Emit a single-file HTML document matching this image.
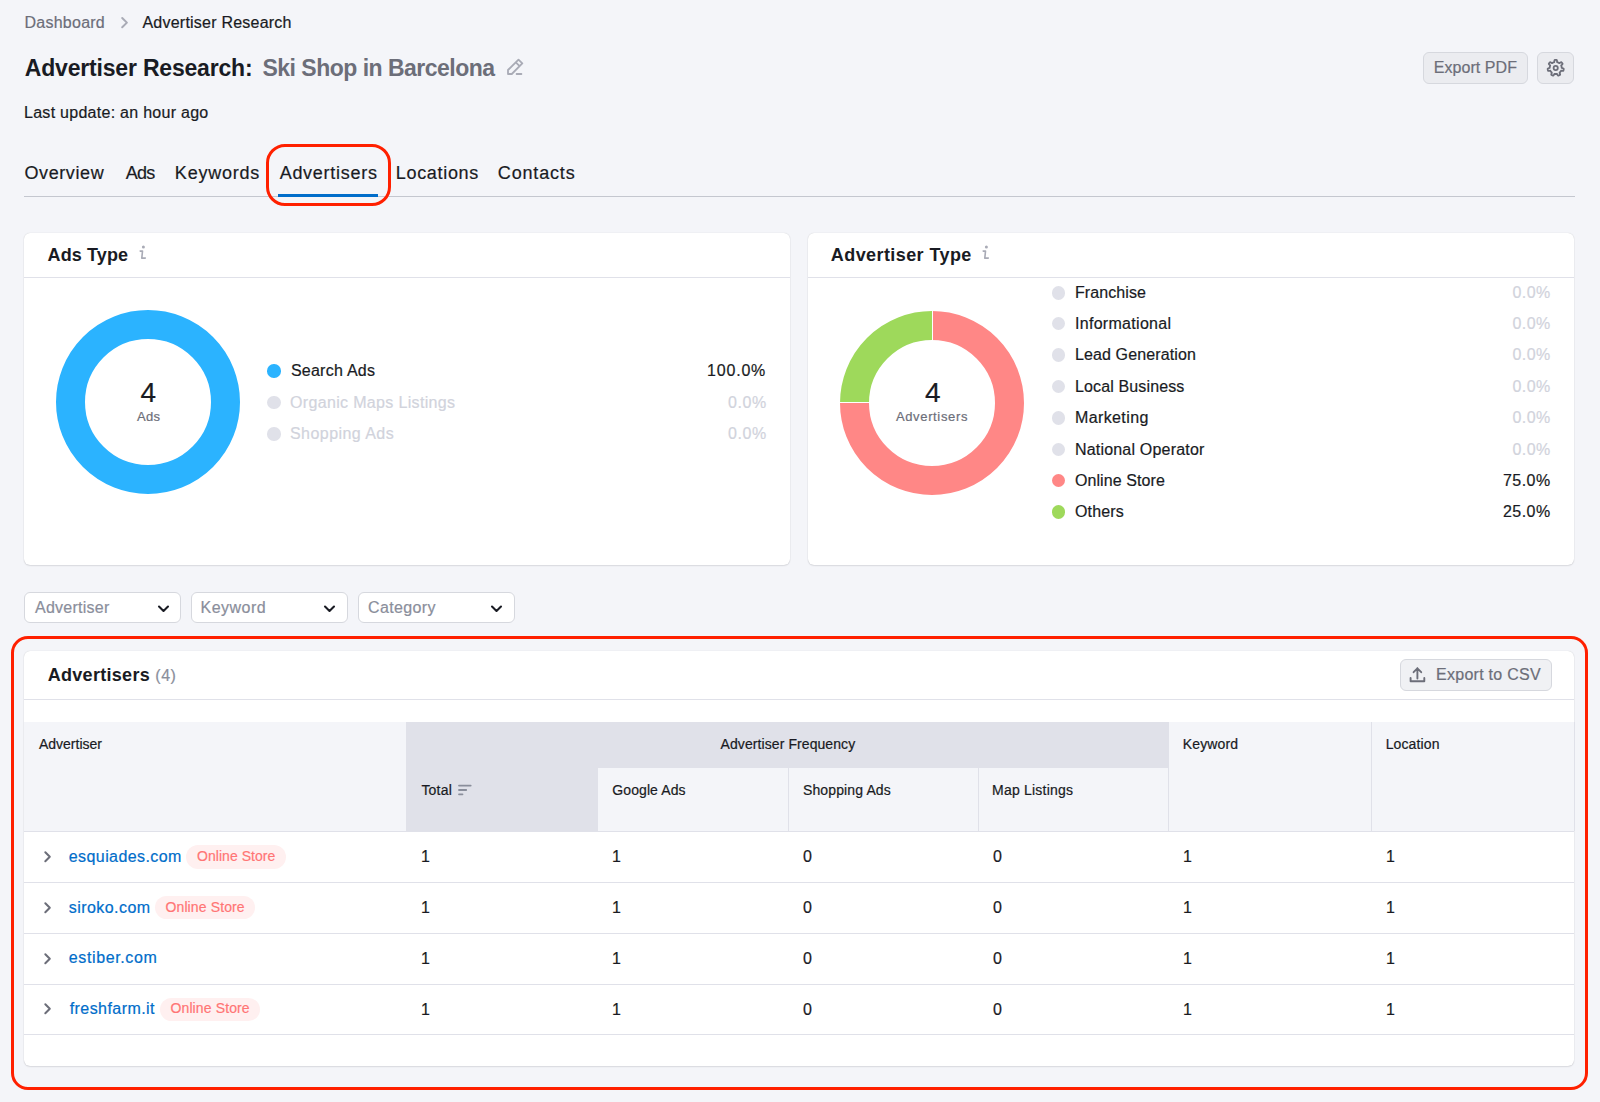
<!DOCTYPE html>
<html><head><meta charset="utf-8"><style>
html,body{margin:0;padding:0;}
body{width:1600px;height:1102px;background:#f4f5f9;position:relative;overflow:hidden;font-family:"Liberation Sans",sans-serif;}
.a,.t{position:absolute;}
.t{white-space:nowrap;line-height:1;-webkit-text-stroke:0.2px currentColor;}
.card{background:#fff;border-radius:6px;box-shadow:0 0 1px rgba(25,27,35,0.22),0 1px 1.5px rgba(25,27,35,0.10);}
.btn{background:#ebecf0;border:1px solid #d6d8de;border-radius:6px;box-sizing:border-box;}
.btn2{background:#f0f1f4;border:1px solid #d6d8de;border-radius:6px;box-sizing:border-box;}
.dd{background:#fff;border:1px solid #d6d8de;border-radius:6px;box-sizing:border-box;}
svg.a{overflow:visible;}
</style></head><body>
<div id="bc1" class="t" style="left:24.57px;top:14.76px;font-size:16px;font-weight:400;color:#6c6e79;letter-spacing:0.236px;">Dashboard</div>
<svg class="a" style="left:118px;top:15px" width="12" height="15" viewBox="0 0 12 15"><path d="M4.2 3.0 L8.9 7.6 L4.2 12.2" fill="none" stroke="#a9abb6" stroke-width="2.0" stroke-linecap="round" stroke-linejoin="round"/></svg>
<div id="bc2" class="t" style="left:142.47px;top:14.76px;font-size:16px;font-weight:400;color:#191b23;letter-spacing:0.225px;">Advertiser Research</div>
<div id="ti1" class="t" style="left:24.84px;top:56.73px;font-size:23px;font-weight:700;color:#191b23;letter-spacing:-0.192px;-webkit-text-stroke:0;">Advertiser Research:</div>
<div id="ti2" class="t" style="left:262.47px;top:56.73px;font-size:23px;font-weight:700;color:#6c6e79;letter-spacing:-0.513px;-webkit-text-stroke:0;">Ski Shop in Barcelona</div>
<svg class="a" style="left:506px;top:57px" width="18" height="19" viewBox="0 0 18 19"><path d="M2 17 V13 L12.5 2.6 L16.3 6.4 L5.8 17 Z M9.8 5.3 L13.6 9.1 M10.6 17 H15.4" fill="none" stroke="#a9abb6" stroke-width="1.8" stroke-linejoin="round" stroke-linecap="round"/></svg>
<div class="a btn" style="left:1423.3px;top:51.6px;width:104.6px;height:32.2px"></div>
<div id="pdf" class="t" style="left:1433.78px;top:59.66px;font-size:16px;font-weight:400;color:#6c6e79;letter-spacing:0.060px;">Export PDF</div>
<div class="a btn" style="left:1536.9px;top:51.6px;width:37.3px;height:32.2px"></div>
<svg class="a" style="left:1545px;top:57px" width="22" height="22" viewBox="0 0 22 22"><path d="M10.70 2.90 L10.88 2.90 L11.06 2.91 L11.24 2.92 L11.43 2.93 L11.61 2.95 L11.78 3.05 L11.91 3.38 L12.00 3.86 L12.05 4.39 L12.10 4.85 L12.18 5.14 L12.30 5.22 L12.43 5.25 L12.55 5.29 L12.68 5.34 L12.81 5.38 L12.93 5.43 L13.06 5.48 L13.18 5.54 L13.30 5.59 L13.42 5.65 L13.54 5.72 L13.66 5.78 L13.78 5.85 L13.89 5.92 L14.01 5.99 L14.12 6.07 L14.23 6.15 L14.36 6.19 L14.63 6.07 L15.02 5.82 L15.47 5.54 L15.91 5.30 L16.24 5.20 L16.43 5.27 L16.55 5.40 L16.68 5.54 L16.80 5.67 L16.92 5.81 L17.03 5.95 L17.14 6.09 L17.25 6.24 L17.36 6.39 L17.46 6.54 L17.56 6.69 L17.58 6.89 L17.41 7.19 L17.09 7.56 L16.71 7.94 L16.38 8.26 L16.20 8.50 L16.22 8.64 L16.27 8.77 L16.32 8.89 L16.36 9.02 L16.41 9.15 L16.45 9.27 L16.48 9.40 L16.52 9.53 L16.55 9.66 L16.58 9.80 L16.60 9.93 L16.63 10.06 L16.65 10.19 L16.66 10.33 L16.68 10.46 L16.69 10.60 L16.69 10.73 L16.74 10.86 L17.01 11.00 L17.44 11.15 L17.95 11.33 L18.40 11.52 L18.69 11.72 L18.75 11.91 L18.73 12.09 L18.70 12.27 L18.67 12.45 L18.64 12.62 L18.60 12.80 L18.55 12.98 L18.51 13.15 L18.46 13.33 L18.40 13.50 L18.35 13.68 L18.21 13.82 L17.86 13.87 L17.37 13.85 L16.84 13.79 L16.38 13.74 L16.09 13.74 L15.98 13.84 L15.92 13.96 L15.85 14.08 L15.78 14.19 L15.71 14.31 L15.63 14.42 L15.55 14.53 L15.47 14.63 L15.39 14.74 L15.31 14.85 L15.22 14.95 L15.13 15.05 L15.04 15.15 L14.94 15.24 L14.85 15.34 L14.75 15.43 L14.65 15.52 L14.57 15.64 L14.63 15.93 L14.79 16.37 L14.96 16.87 L15.09 17.34 L15.12 17.69 L15.01 17.86 L14.85 17.95 L14.70 18.04 L14.54 18.13 L14.38 18.22 L14.21 18.30 L14.05 18.37 L13.88 18.45 L13.72 18.52 L13.55 18.58 L13.38 18.65 L13.18 18.63 L12.92 18.39 L12.63 17.99 L12.35 17.54 L12.10 17.15 L11.91 16.92 L11.77 16.90 L11.64 16.93 L11.51 16.95 L11.37 16.96 L11.24 16.98 L11.10 16.99 L10.97 16.99 L10.83 17.00 L10.70 17.00 L10.57 17.00 L10.43 16.99 L10.30 16.99 L10.16 16.98 L10.03 16.96 L9.89 16.95 L9.76 16.93 L9.63 16.90 L9.49 16.92 L9.30 17.15 L9.05 17.54 L8.77 17.99 L8.48 18.39 L8.22 18.63 L8.02 18.65 L7.85 18.58 L7.68 18.52 L7.52 18.45 L7.35 18.37 L7.19 18.30 L7.02 18.22 L6.86 18.13 L6.70 18.04 L6.55 17.95 L6.39 17.86 L6.28 17.69 L6.31 17.34 L6.44 16.87 L6.61 16.37 L6.77 15.93 L6.83 15.64 L6.75 15.52 L6.65 15.43 L6.55 15.34 L6.46 15.24 L6.36 15.15 L6.27 15.05 L6.18 14.95 L6.09 14.85 L6.01 14.74 L5.93 14.63 L5.85 14.53 L5.77 14.42 L5.69 14.31 L5.62 14.19 L5.55 14.08 L5.48 13.96 L5.42 13.84 L5.31 13.74 L5.02 13.74 L4.56 13.79 L4.03 13.85 L3.54 13.87 L3.19 13.82 L3.05 13.68 L3.00 13.50 L2.94 13.33 L2.89 13.15 L2.85 12.98 L2.80 12.80 L2.76 12.62 L2.73 12.45 L2.70 12.27 L2.67 12.09 L2.65 11.91 L2.71 11.72 L3.00 11.52 L3.45 11.33 L3.96 11.15 L4.39 11.00 L4.66 10.86 L4.71 10.73 L4.71 10.60 L4.72 10.46 L4.74 10.33 L4.75 10.19 L4.77 10.06 L4.80 9.93 L4.82 9.80 L4.85 9.66 L4.88 9.53 L4.92 9.40 L4.95 9.27 L4.99 9.15 L5.04 9.02 L5.08 8.89 L5.13 8.77 L5.18 8.64 L5.20 8.50 L5.02 8.26 L4.69 7.94 L4.31 7.56 L3.99 7.19 L3.82 6.89 L3.84 6.69 L3.94 6.54 L4.04 6.39 L4.15 6.24 L4.26 6.09 L4.37 5.95 L4.48 5.81 L4.60 5.67 L4.72 5.54 L4.85 5.40 L4.97 5.27 L5.16 5.20 L5.49 5.30 L5.93 5.54 L6.38 5.82 L6.77 6.07 L7.04 6.19 L7.17 6.15 L7.28 6.07 L7.39 5.99 L7.51 5.92 L7.62 5.85 L7.74 5.78 L7.86 5.72 L7.98 5.65 L8.10 5.59 L8.22 5.54 L8.34 5.48 L8.47 5.43 L8.59 5.38 L8.72 5.34 L8.85 5.29 L8.97 5.25 L9.10 5.22 L9.22 5.14 L9.30 4.85 L9.35 4.39 L9.40 3.86 L9.49 3.38 L9.62 3.05 L9.79 2.95 L9.97 2.93 L10.16 2.92 L10.34 2.91 L10.52 2.90 Z" fill="none" stroke="#6c6e79" stroke-width="1.8" stroke-linejoin="round"/><circle cx="10.7" cy="11.0" r="2.1" fill="none" stroke="#6c6e79" stroke-width="1.8"/></svg>
<div id="upd" class="t" style="left:24.02px;top:104.76px;font-size:16px;font-weight:400;color:#191b23;letter-spacing:0.274px;">Last update: an hour ago</div>
<div id="tab1" class="t" style="left:24.40px;top:163.76px;font-size:18px;font-weight:400;color:#191b23;letter-spacing:0.617px;">Overview</div>
<div id="tab2" class="t" style="left:125.67px;top:163.76px;font-size:18px;font-weight:400;color:#191b23;letter-spacing:-0.675px;">Ads</div>
<div id="tab3" class="t" style="left:174.87px;top:163.76px;font-size:18px;font-weight:400;color:#191b23;letter-spacing:0.771px;">Keywords</div>
<div id="tab4" class="t" style="left:279.67px;top:163.76px;font-size:18px;font-weight:400;color:#191b23;letter-spacing:0.720px;">Advertisers</div>
<div id="tab5" class="t" style="left:395.82px;top:163.76px;font-size:18px;font-weight:400;color:#191b23;letter-spacing:0.675px;">Locations</div>
<div id="tab6" class="t" style="left:497.82px;top:163.76px;font-size:18px;font-weight:400;color:#191b23;letter-spacing:0.836px;">Contacts</div>
<div class="a" style="left:24px;top:196px;width:1550.5px;height:1px;background:#c4c7cf"></div>
<div class="a" style="left:278.3px;top:193.5px;width:99.8px;height:3px;background:#006dca"></div>
<div class="a" style="left:265.6px;top:144.3px;width:125.2px;height:61.4px;border:3.6px solid #ff2000;border-radius:19px;box-sizing:border-box"></div>
<div class="a card" style="left:24px;top:232.5px;width:766.2px;height:332.5px"></div><div class="a" style="left:24px;top:277px;width:766.2px;height:1px;background:#e0e1e9"></div>
<div class="a card" style="left:808px;top:232.5px;width:766.3px;height:332.5px"></div><div class="a" style="left:808px;top:277px;width:766.3px;height:1px;background:#e0e1e9"></div>
<div id="h1" class="t" style="left:47.56px;top:245.76px;font-size:18px;font-weight:700;color:#191b23;letter-spacing:0.116px;-webkit-text-stroke:0;">Ads Type</div>
<div id="h2" class="t" style="left:830.82px;top:245.76px;font-size:18px;font-weight:700;color:#191b23;letter-spacing:0.418px;-webkit-text-stroke:0;">Advertiser Type</div>
<svg class="a" style="left:136px;top:242px" width="12" height="18" viewBox="0 0 12 18"><circle cx="7.40" cy="5.10" r="1.5" fill="#a9abb6"/><path d="M4.20 9.10 H6.50 L5.80 16.10 H9.30" fill="none" stroke="#a9abb6" stroke-width="1.6" stroke-linecap="round" stroke-linejoin="round"/></svg>
<svg class="a" style="left:979px;top:242px" width="12" height="18" viewBox="0 0 12 18"><circle cx="7.40" cy="5.10" r="1.5" fill="#a9abb6"/><path d="M4.20 9.10 H6.50 L5.80 16.10 H9.30" fill="none" stroke="#a9abb6" stroke-width="1.6" stroke-linecap="round" stroke-linejoin="round"/></svg>
<svg class="a" style="left:54px;top:308.3px" width="188" height="188" viewBox="54 308.3 188 188"><circle cx="148" cy="402.3" r="77.5" fill="none" stroke="#2bb3ff" stroke-width="29"/></svg>
<svg class="a" style="left:838.4px;top:308.5px" width="188" height="188" viewBox="838.4 308.5 188 188"><path d="M932.40 325.00 A77.5 77.5 0 1 1 854.90 402.50" fill="none" stroke="#ff8786" stroke-width="29"/><path d="M854.90 402.50 A77.5 77.5 0 0 1 932.40 325.00" fill="none" stroke="#9ed95b" stroke-width="29"/></svg>
<div class="a" style="left:931.9px;top:310px;width:1px;height:30px;background:#fff"></div>
<div class="a" style="left:840px;top:402px;width:30px;height:1px;background:#fff"></div>
<div id="d1n" class="t" style="left:140.54px;top:378.90px;font-size:28px;font-weight:400;color:#191b23;letter-spacing:0.000px;">4</div>
<div id="d1l" class="t" style="left:137.02px;top:410.00px;font-size:13px;font-weight:400;color:#6c6e79;letter-spacing:0.270px;">Ads</div>
<div id="d2n" class="t" style="left:924.91px;top:379.20px;font-size:28px;font-weight:400;color:#191b23;letter-spacing:0.000px;">4</div>
<div id="d2l" class="t" style="left:895.91px;top:410.00px;font-size:13px;font-weight:400;color:#6c6e79;letter-spacing:0.648px;">Advertisers</div>
<div class="a" style="left:267.35px;top:364.00px;width:13.5px;height:13.5px;border-radius:50%;background:#2bb3ff"></div>
<div id="l1a" class="t" style="left:290.89px;top:362.61px;font-size:16px;font-weight:400;color:#191b23;letter-spacing:0.250px;">Search Ads</div>
<div id="l1ap" class="t" style="right:833.83px;top:362.61px;font-size:16px;font-weight:400;color:#191b23;letter-spacing:0.810px;">100.0%</div>
<div class="a" style="left:267.35px;top:395.50px;width:13.5px;height:13.5px;border-radius:50%;background:#e0e1e9"></div>
<div id="l1b" class="t" style="left:289.99px;top:394.81px;font-size:16px;font-weight:400;color:#d1d3dc;letter-spacing:0.338px;">Organic Maps Listings</div>
<div id="l1bp" class="t" style="right:833.14px;top:394.81px;font-size:16px;font-weight:400;color:#d1d3dc;letter-spacing:0.600px;">0.0%</div>
<div class="a" style="left:267.35px;top:427.00px;width:13.5px;height:13.5px;border-radius:50%;background:#e0e1e9"></div>
<div id="l1c" class="t" style="left:289.99px;top:425.61px;font-size:16px;font-weight:400;color:#d1d3dc;letter-spacing:0.450px;">Shopping Ads</div>
<div id="l1cp" class="t" style="right:833.14px;top:425.61px;font-size:16px;font-weight:400;color:#d1d3dc;letter-spacing:0.600px;">0.0%</div>
<div class="a" style="left:1051.65px;top:286.00px;width:13.5px;height:13.5px;border-radius:50%;background:#e0e1e9"></div>
<div id="l2a" class="t" style="left:1074.94px;top:284.61px;font-size:16px;font-weight:400;color:#191b23;letter-spacing:0.084px;">Franchise</div>
<div id="l2ap" class="t" style="right:49.26px;top:284.61px;font-size:16px;font-weight:400;color:#d1d3dc;letter-spacing:0.450px;">0.0%</div>
<div class="a" style="left:1051.65px;top:316.75px;width:13.5px;height:13.5px;border-radius:50%;background:#e0e1e9"></div>
<div id="l2b" class="t" style="left:1074.94px;top:316.06px;font-size:16px;font-weight:400;color:#191b23;letter-spacing:0.300px;">Informational</div>
<div id="l2bp" class="t" style="right:49.26px;top:316.06px;font-size:16px;font-weight:400;color:#d1d3dc;letter-spacing:0.450px;">0.0%</div>
<div class="a" style="left:1051.65px;top:348.25px;width:13.5px;height:13.5px;border-radius:50%;background:#e0e1e9"></div>
<div id="l2c" class="t" style="left:1074.94px;top:346.86px;font-size:16px;font-weight:400;color:#191b23;letter-spacing:0.129px;">Lead Generation</div>
<div id="l2cp" class="t" style="right:49.26px;top:346.86px;font-size:16px;font-weight:400;color:#d1d3dc;letter-spacing:0.450px;">0.0%</div>
<div class="a" style="left:1051.65px;top:379.75px;width:13.5px;height:13.5px;border-radius:50%;background:#e0e1e9"></div>
<div id="l2d" class="t" style="left:1074.94px;top:379.06px;font-size:16px;font-weight:400;color:#191b23;letter-spacing:0.138px;">Local Business</div>
<div id="l2dp" class="t" style="right:49.26px;top:379.06px;font-size:16px;font-weight:400;color:#d1d3dc;letter-spacing:0.450px;">0.0%</div>
<div class="a" style="left:1051.65px;top:411.25px;width:13.5px;height:13.5px;border-radius:50%;background:#e0e1e9"></div>
<div id="l2e" class="t" style="left:1074.94px;top:409.86px;font-size:16px;font-weight:400;color:#191b23;letter-spacing:0.394px;">Marketing</div>
<div id="l2ep" class="t" style="right:49.26px;top:409.86px;font-size:16px;font-weight:400;color:#d1d3dc;letter-spacing:0.450px;">0.0%</div>
<div class="a" style="left:1051.65px;top:442.75px;width:13.5px;height:13.5px;border-radius:50%;background:#e0e1e9"></div>
<div id="l2f" class="t" style="left:1074.94px;top:442.06px;font-size:16px;font-weight:400;color:#191b23;letter-spacing:0.197px;">National Operator</div>
<div id="l2fp" class="t" style="right:49.26px;top:442.06px;font-size:16px;font-weight:400;color:#d1d3dc;letter-spacing:0.450px;">0.0%</div>
<div class="a" style="left:1051.65px;top:473.75px;width:13.5px;height:13.5px;border-radius:50%;background:#ff8786"></div>
<div id="l2g" class="t" style="left:1074.94px;top:473.06px;font-size:16px;font-weight:400;color:#191b23;letter-spacing:0.082px;">Online Store</div>
<div id="l2gp" class="t" style="right:49.44px;top:473.06px;font-size:16px;font-weight:400;color:#191b23;letter-spacing:0.450px;">75.0%</div>
<div class="a" style="left:1051.65px;top:505.25px;width:13.5px;height:13.5px;border-radius:50%;background:#9ed95b"></div>
<div id="l2h" class="t" style="left:1074.94px;top:503.86px;font-size:16px;font-weight:400;color:#191b23;letter-spacing:0.180px;">Others</div>
<div id="l2hp" class="t" style="right:49.44px;top:503.86px;font-size:16px;font-weight:400;color:#191b23;letter-spacing:0.450px;">25.0%</div>
<div class="a dd" style="left:24.3px;top:592.1px;width:157.2px;height:30.7px"></div><div id="f1" class="t" style="left:35.05px;top:599.66px;font-size:16px;font-weight:400;color:#8a8e9b;letter-spacing:0.250px;">Advertiser</div><svg class="a" style="left:155.5px;top:601px" width="15" height="15" viewBox="0 0 15 15"><path d="M3 5.5 L7.5 10 L12 5.5" fill="none" stroke="#191b23" stroke-width="2.1" stroke-linecap="round" stroke-linejoin="round"/></svg>
<div class="a dd" style="left:191.4px;top:592.1px;width:156.6px;height:30.7px"></div><div id="f2" class="t" style="left:200.62px;top:599.66px;font-size:16px;font-weight:400;color:#8a8e9b;letter-spacing:0.450px;">Keyword</div><svg class="a" style="left:322px;top:601px" width="15" height="15" viewBox="0 0 15 15"><path d="M3 5.5 L7.5 10 L12 5.5" fill="none" stroke="#191b23" stroke-width="2.1" stroke-linecap="round" stroke-linejoin="round"/></svg>
<div class="a dd" style="left:358px;top:592.1px;width:157px;height:30.7px"></div><div id="f3" class="t" style="left:367.94px;top:599.66px;font-size:16px;font-weight:400;color:#8a8e9b;letter-spacing:0.386px;">Category</div><svg class="a" style="left:489px;top:601px" width="15" height="15" viewBox="0 0 15 15"><path d="M3 5.5 L7.5 10 L12 5.5" fill="none" stroke="#191b23" stroke-width="2.1" stroke-linecap="round" stroke-linejoin="round"/></svg>
<div class="a" style="left:10.7px;top:635.6px;width:1577.6px;height:454.2px;border:3.9px solid #ff2000;border-radius:17px;box-sizing:border-box"></div>
<div class="a card" style="left:24px;top:650.5px;width:1550.4px;height:415.5px"></div><div class="a" style="left:24px;top:699.4px;width:1550.4px;height:1px;background:#e0e1e9"></div>
<div id="tt" class="t" style="left:47.74px;top:665.76px;font-size:18px;font-weight:700;color:#191b23;letter-spacing:0.292px;-webkit-text-stroke:0;">Advertisers</div>
<div id="tc" class="t" style="left:155.36px;top:667.96px;font-size:16px;font-weight:400;color:#8a8e9b;letter-spacing:0.450px;">(4)</div>
<div class="a btn2" style="left:1400.3px;top:658.8px;width:151.4px;height:32.2px"></div>
<svg class="a" style="left:1406px;top:664.4px" width="22" height="22" viewBox="1406 664 22 22"><path d="M1417.4 678.6 V668.3 M1413.6 672.2 L1417.4 668.3 L1421.2 672.2 M1410.6 677.9 V681.2 H1424.3 V677.9" fill="none" stroke="#6c6e79" stroke-width="1.9" stroke-linecap="round" stroke-linejoin="round"/></svg>
<div id="csv" class="t" style="left:1435.99px;top:666.76px;font-size:16px;font-weight:400;color:#6c6e79;letter-spacing:0.278px;">Export to CSV</div>
<div class="a" style="left:24px;top:722.3px;width:1550.4px;height:108.90000000000009px;background:#f4f5f9"></div>
<div class="a" style="left:406.3px;top:722.3px;width:762.4px;height:45.40000000000009px;background:#e0e1e9"></div>
<div class="a" style="left:406.3px;top:767.7px;width:191.5px;height:63.5px;background:#e0e1e9"></div>
<div class="a" style="left:788.0px;top:767.7px;width:1px;height:63.5px;background:#e0e1e9"></div>
<div class="a" style="left:978.0px;top:767.7px;width:1px;height:63.5px;background:#e0e1e9"></div>
<div class="a" style="left:1167.8px;top:722.3px;width:1px;height:108.90000000000009px;background:#e0e1e9"></div>
<div class="a" style="left:1370.9px;top:722.3px;width:1px;height:108.90000000000009px;background:#e0e1e9"></div>
<div class="a" style="left:1573.5px;top:722.3px;width:1px;height:108.90000000000009px;background:#e0e1e9"></div>
<div class="a" style="left:24px;top:830.7px;width:1550.4px;height:1px;background:#e0e1e9"></div>
<div id="th1" class="t" style="left:38.96px;top:736.85px;font-size:14px;font-weight:400;color:#191b23;letter-spacing:0.000px;">Advertiser</div>
<div id="th2" class="t" style="left:720.54px;top:736.85px;font-size:14px;font-weight:400;color:#191b23;letter-spacing:0.085px;">Advertiser Frequency</div>
<div id="th3" class="t" style="left:1182.85px;top:736.85px;font-size:14px;font-weight:400;color:#191b23;letter-spacing:0.135px;">Keyword</div>
<div id="th4" class="t" style="left:1385.64px;top:736.85px;font-size:14px;font-weight:400;color:#191b23;letter-spacing:0.129px;">Location</div>
<div id="th5" class="t" style="left:421.43px;top:782.95px;font-size:14px;font-weight:400;color:#191b23;letter-spacing:0.202px;">Total</div>
<div id="th6" class="t" style="left:612.27px;top:782.95px;font-size:14px;font-weight:400;color:#191b23;letter-spacing:0.100px;">Google Ads</div>
<div id="th7" class="t" style="left:803.01px;top:782.95px;font-size:14px;font-weight:400;color:#191b23;letter-spacing:0.123px;">Shopping Ads</div>
<div id="th8" class="t" style="left:992.11px;top:782.95px;font-size:14px;font-weight:400;color:#191b23;letter-spacing:0.205px;">Map Listings</div>
<svg class="a" style="left:456px;top:782px" width="18" height="16" viewBox="456 782 18 16"><path d="M459 785.6 H470.7 M459 790 H466.2 M459 794.3 H462.5" fill="none" stroke="#8a8e9b" stroke-width="1.8" stroke-linecap="round"/></svg>
<div class="a" style="left:24px;top:882.0px;width:1550.4px;height:1px;background:#e0e1e9"></div>
<svg class="a" style="left:41px;top:849.00px" width="14" height="16" viewBox="0 0 14 16"><path d="M4.3 3.3 L8.8 7.8 L4.3 12.3" fill="none" stroke="#6c6e79" stroke-width="2" stroke-linecap="round" stroke-linejoin="round"/></svg>
<div id="r0n" class="t" style="left:68.78px;top:848.96px;font-size:16px;font-weight:400;color:#006dca;letter-spacing:0.420px;">esquiades.com</div>
<div class="a" style="left:186.40px;top:845.30px;width:100px;height:23.3px;border-radius:12px;background:#fff0f0"></div>
<div id="r0b" class="t" style="left:197.06px;top:849.15px;font-size:14px;font-weight:400;color:#ff7575;letter-spacing:0.041px;">Online Store</div>
<div id="r0c0" class="t" style="left:420.99px;top:848.96px;font-size:16px;font-weight:400;color:#191b23;letter-spacing:0.000px;">1</div>
<div id="r0c1" class="t" style="left:611.94px;top:848.96px;font-size:16px;font-weight:400;color:#191b23;letter-spacing:0.000px;">1</div>
<div id="r0c2" class="t" style="left:802.89px;top:848.96px;font-size:16px;font-weight:400;color:#191b23;letter-spacing:0.000px;">0</div>
<div id="r0c3" class="t" style="left:992.89px;top:848.96px;font-size:16px;font-weight:400;color:#191b23;letter-spacing:0.000px;">0</div>
<div id="r0c4" class="t" style="left:1182.99px;top:848.96px;font-size:16px;font-weight:400;color:#191b23;letter-spacing:0.000px;">1</div>
<div id="r0c5" class="t" style="left:1385.99px;top:848.96px;font-size:16px;font-weight:400;color:#191b23;letter-spacing:0.000px;">1</div>
<div class="a" style="left:24px;top:932.5px;width:1550.4px;height:1px;background:#e0e1e9"></div>
<svg class="a" style="left:41px;top:899.75px" width="14" height="16" viewBox="0 0 14 16"><path d="M4.3 3.3 L8.8 7.8 L4.3 12.3" fill="none" stroke="#6c6e79" stroke-width="2" stroke-linecap="round" stroke-linejoin="round"/></svg>
<div id="r1n" class="t" style="left:68.78px;top:899.71px;font-size:16px;font-weight:400;color:#006dca;letter-spacing:0.440px;">siroko.com</div>
<div class="a" style="left:155.00px;top:896.05px;width:100px;height:23.3px;border-radius:12px;background:#fff0f0"></div>
<div id="r1b" class="t" style="left:165.48px;top:899.90px;font-size:14px;font-weight:400;color:#ff7575;letter-spacing:0.123px;">Online Store</div>
<div id="r1c0" class="t" style="left:420.99px;top:899.71px;font-size:16px;font-weight:400;color:#191b23;letter-spacing:0.000px;">1</div>
<div id="r1c1" class="t" style="left:611.94px;top:899.71px;font-size:16px;font-weight:400;color:#191b23;letter-spacing:0.000px;">1</div>
<div id="r1c2" class="t" style="left:802.89px;top:899.71px;font-size:16px;font-weight:400;color:#191b23;letter-spacing:0.000px;">0</div>
<div id="r1c3" class="t" style="left:992.89px;top:899.71px;font-size:16px;font-weight:400;color:#191b23;letter-spacing:0.000px;">0</div>
<div id="r1c4" class="t" style="left:1182.99px;top:899.71px;font-size:16px;font-weight:400;color:#191b23;letter-spacing:0.000px;">1</div>
<div id="r1c5" class="t" style="left:1385.99px;top:899.71px;font-size:16px;font-weight:400;color:#191b23;letter-spacing:0.000px;">1</div>
<div class="a" style="left:24px;top:983.5px;width:1550.4px;height:1px;background:#e0e1e9"></div>
<svg class="a" style="left:41px;top:950.50px" width="14" height="16" viewBox="0 0 14 16"><path d="M4.3 3.3 L8.8 7.8 L4.3 12.3" fill="none" stroke="#6c6e79" stroke-width="2" stroke-linecap="round" stroke-linejoin="round"/></svg>
<div id="r2n" class="t" style="left:68.78px;top:949.76px;font-size:16px;font-weight:400;color:#006dca;letter-spacing:0.621px;">estiber.com</div>
<div id="r2c0" class="t" style="left:420.99px;top:951.16px;font-size:16px;font-weight:400;color:#191b23;letter-spacing:0.000px;">1</div>
<div id="r2c1" class="t" style="left:611.94px;top:951.16px;font-size:16px;font-weight:400;color:#191b23;letter-spacing:0.000px;">1</div>
<div id="r2c2" class="t" style="left:802.89px;top:951.16px;font-size:16px;font-weight:400;color:#191b23;letter-spacing:0.000px;">0</div>
<div id="r2c3" class="t" style="left:992.89px;top:951.16px;font-size:16px;font-weight:400;color:#191b23;letter-spacing:0.000px;">0</div>
<div id="r2c4" class="t" style="left:1182.99px;top:951.16px;font-size:16px;font-weight:400;color:#191b23;letter-spacing:0.000px;">1</div>
<div id="r2c5" class="t" style="left:1385.99px;top:951.16px;font-size:16px;font-weight:400;color:#191b23;letter-spacing:0.000px;">1</div>
<div class="a" style="left:24px;top:1034.0px;width:1550.4px;height:1px;background:#e0e1e9"></div>
<svg class="a" style="left:41px;top:1001.25px" width="14" height="16" viewBox="0 0 14 16"><path d="M4.3 3.3 L8.8 7.8 L4.3 12.3" fill="none" stroke="#6c6e79" stroke-width="2" stroke-linecap="round" stroke-linejoin="round"/></svg>
<div id="r3n" class="t" style="left:69.68px;top:1000.51px;font-size:16px;font-weight:400;color:#006dca;letter-spacing:0.442px;">freshfarm.it</div>
<div class="a" style="left:160.00px;top:997.55px;width:100px;height:23.3px;border-radius:12px;background:#fff0f0"></div>
<div id="r3b" class="t" style="left:170.48px;top:1001.40px;font-size:14px;font-weight:400;color:#ff7575;letter-spacing:0.123px;">Online Store</div>
<div id="r3c0" class="t" style="left:420.99px;top:1001.91px;font-size:16px;font-weight:400;color:#191b23;letter-spacing:0.000px;">1</div>
<div id="r3c1" class="t" style="left:611.94px;top:1001.91px;font-size:16px;font-weight:400;color:#191b23;letter-spacing:0.000px;">1</div>
<div id="r3c2" class="t" style="left:802.89px;top:1001.91px;font-size:16px;font-weight:400;color:#191b23;letter-spacing:0.000px;">0</div>
<div id="r3c3" class="t" style="left:992.89px;top:1001.91px;font-size:16px;font-weight:400;color:#191b23;letter-spacing:0.000px;">0</div>
<div id="r3c4" class="t" style="left:1182.99px;top:1001.91px;font-size:16px;font-weight:400;color:#191b23;letter-spacing:0.000px;">1</div>
<div id="r3c5" class="t" style="left:1385.99px;top:1001.91px;font-size:16px;font-weight:400;color:#191b23;letter-spacing:0.000px;">1</div>
</body></html>
